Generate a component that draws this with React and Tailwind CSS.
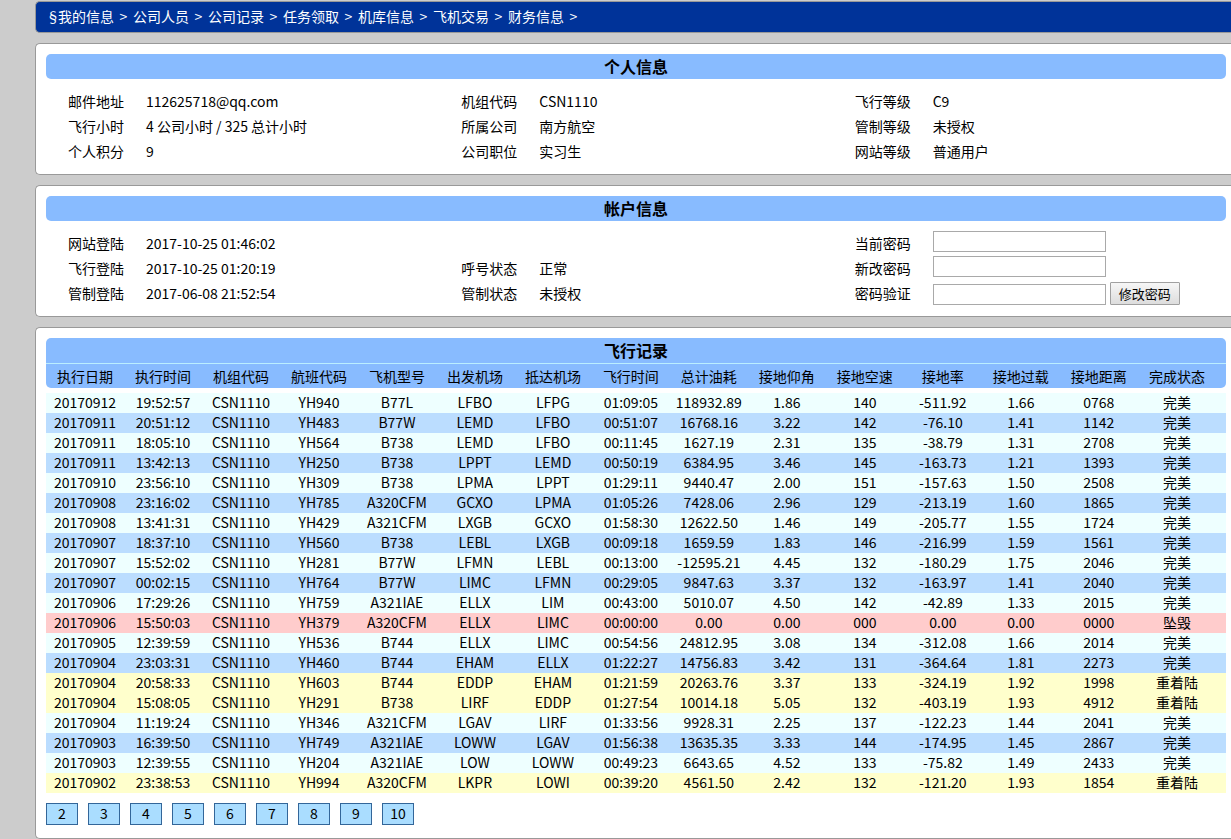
import React, { useState } from 'react';

const navItems = ['我的信息', '公司人员', '公司记录', '任务领取', '机库信息', '飞机交易', '财务信息'];

// one array per column, top to bottom
const profile = [
    [['邮件地址', '112625718@qq.com'], ['飞行小时', '4 公司小时 / 325 总计小时'], ['个人积分', '9']],
    [['机组代码', 'CSN1110'], ['所属公司', '南方航空'], ['公司职位', '实习生']],
    [['飞行等级', 'C9'], ['管制等级', '未授权'], ['网站等级', '普通用户']],
];

const logins = [
    ['网站登陆', '2017-10-25 01:46:02'],
    ['飞行登陆', '2017-10-25 01:20:19'],
    ['管制登陆', '2017-06-08 21:52:54'],
];

const statuses = [
    ['呼号状态', '正常'],
    ['管制状态', '未授权'],
];

const columns = [
    '执行日期', '执行时间', '机组代码', '航班代码', '飞机型号', '出发机场', '抵达机场', '飞行时间',
    '总计油耗', '接地仰角', '接地空速', '接地率', '接地过载', '接地距离', '完成状态',
];

const flights = [
    ['20170912', '19:52:57', 'CSN1110', 'YH940', 'B77L', 'LFBO', 'LFPG', '01:09:05', '118932.89', '1.86', '140', '-511.92', '1.66', '0768', '完美'],
    ['20170911', '20:51:12', 'CSN1110', 'YH483', 'B77W', 'LEMD', 'LFBO', '00:51:07', '16768.16', '3.22', '142', '-76.10', '1.41', '1142', '完美'],
    ['20170911', '18:05:10', 'CSN1110', 'YH564', 'B738', 'LEMD', 'LFBO', '00:11:45', '1627.19', '2.31', '135', '-38.79', '1.31', '2708', '完美'],
    ['20170911', '13:42:13', 'CSN1110', 'YH250', 'B738', 'LPPT', 'LEMD', '00:50:19', '6384.95', '3.46', '145', '-163.73', '1.21', '1393', '完美'],
    ['20170910', '23:56:10', 'CSN1110', 'YH309', 'B738', 'LPMA', 'LPPT', '01:29:11', '9440.47', '2.00', '151', '-157.63', '1.50', '2508', '完美'],
    ['20170908', '23:16:02', 'CSN1110', 'YH785', 'A320CFM', 'GCXO', 'LPMA', '01:05:26', '7428.06', '2.96', '129', '-213.19', '1.60', '1865', '完美'],
    ['20170908', '13:41:31', 'CSN1110', 'YH429', 'A321CFM', 'LXGB', 'GCXO', '01:58:30', '12622.50', '1.46', '149', '-205.77', '1.55', '1724', '完美'],
    ['20170907', '18:37:10', 'CSN1110', 'YH560', 'B738', 'LEBL', 'LXGB', '00:09:18', '1659.59', '1.83', '146', '-216.99', '1.59', '1561', '完美'],
    ['20170907', '15:52:02', 'CSN1110', 'YH281', 'B77W', 'LFMN', 'LEBL', '00:13:00', '-12595.21', '4.45', '132', '-180.29', '1.75', '2046', '完美'],
    ['20170907', '00:02:15', 'CSN1110', 'YH764', 'B77W', 'LIMC', 'LFMN', '00:29:05', '9847.63', '3.37', '132', '-163.97', '1.41', '2040', '完美'],
    ['20170906', '17:29:26', 'CSN1110', 'YH759', 'A321IAE', 'ELLX', 'LIM', '00:43:00', '5010.07', '4.50', '142', '-42.89', '1.33', '2015', '完美'],
    ['20170906', '15:50:03', 'CSN1110', 'YH379', 'A320CFM', 'ELLX', 'LIMC', '00:00:00', '0.00', '0.00', '000', '0.00', '0.00', '0000', '坠毁'],
    ['20170905', '12:39:59', 'CSN1110', 'YH536', 'B744', 'ELLX', 'LIMC', '00:54:56', '24812.95', '3.08', '134', '-312.08', '1.66', '2014', '完美'],
    ['20170904', '23:03:31', 'CSN1110', 'YH460', 'B744', 'EHAM', 'ELLX', '01:22:27', '14756.83', '3.42', '131', '-364.64', '1.81', '2273', '完美'],
    ['20170904', '20:58:33', 'CSN1110', 'YH603', 'B744', 'EDDP', 'EHAM', '01:21:59', '20263.76', '3.37', '133', '-324.19', '1.92', '1998', '重着陆'],
    ['20170904', '15:08:05', 'CSN1110', 'YH291', 'B738', 'LIRF', 'EDDP', '01:27:54', '10014.18', '5.05', '132', '-403.19', '1.93', '4912', '重着陆'],
    ['20170904', '11:19:24', 'CSN1110', 'YH346', 'A321CFM', 'LGAV', 'LIRF', '01:33:56', '9928.31', '2.25', '137', '-122.23', '1.44', '2041', '完美'],
    ['20170903', '16:39:50', 'CSN1110', 'YH749', 'A321IAE', 'LOWW', 'LGAV', '01:56:38', '13635.35', '3.33', '144', '-174.95', '1.45', '2867', '完美'],
    ['20170903', '12:39:55', 'CSN1110', 'YH204', 'A321IAE', 'LOW', 'LOWW', '00:49:23', '6643.65', '4.52', '133', '-75.82', '1.49', '2433', '完美'],
    ['20170902', '23:38:53', 'CSN1110', 'YH994', 'A320CFM', 'LKPR', 'LOWI', '00:39:20', '4561.50', '2.42', '132', '-121.20', '1.93', '1854', '重着陆'],
];

const pages = [2, 3, 4, 5, 6, 7, 8, 9, 10];

const rowColor = (status, index) => {
    if (status === '坠毁') return 'bg-[#ffcccc]';
    if (status === '重着陆') return 'bg-[#ffffcc]';
    return index % 2 === 0 ? 'bg-[#eeffff]' : 'bg-[#bbddff]';
};

const Panel = ({ children }) => (
    <section className="rounded-l-[5px] border border-r-0 border-[#999999] bg-white py-2.5 pl-2.5 pr-[5px]">
        {children}
    </section>
);

const PanelTitle = ({ children }) => (
    <h2 className="h-[25px] rounded-[5px] bg-[#88bbff] text-center text-base leading-[25px] font-bold">{children}</h2>
);

const InfoList = ({ items }) => (
    <dl>
        {items.map(([label, value]) => (
            <div key={label} className="flex h-[25px] leading-[25px]">
                <dt className="w-[100px] shrink-0 pl-[22px]">{label}</dt>
                <dd className="whitespace-nowrap">{value}</dd>
            </div>
        ))}
    </dl>
);

const PasswordField = ({ id, label, value, onChange, children }) => (
    <div className="flex h-[25px]">
        <label htmlFor={id} className="w-[100px] shrink-0 pl-[22px] leading-[25px]">{label}</label>
        <div className={`flex ${children ? 'items-end pb-px' : 'items-start'}`}>
            <input
                id={id}
                type="password"
                value={value}
                onChange={e => onChange(e.target.value)}
                className="h-[21px] w-[173px] border border-[#a9a9a9] bg-white px-1"
            />
            {children}
        </div>
    </div>
);

const PasswordForm = () => {
    const [current, setCurrent] = useState('');
    const [next, setNext] = useState('');
    const [confirm, setConfirm] = useState('');

    return (
        <form onSubmit={e => e.preventDefault()}>
            <PasswordField id="current" label="当前密码" value={current} onChange={setCurrent} />
            <PasswordField id="next" label="新改密码" value={next} onChange={setNext} />
            <PasswordField id="confirm" label="密码验证" value={confirm} onChange={setConfirm}>
                <button
                    type="submit"
                    className="ml-1 h-[23px] w-[70px] rounded-[1px] border border-[#a0a0a0] bg-gradient-to-b from-[#f6f6f6] to-[#dddddd] text-[13px] leading-5 whitespace-nowrap"
                >
                    修改密码
                </button>
            </PasswordField>
        </form>
    );
};

const FlightTable = () => (
    <table className="w-full table-fixed border-separate border-spacing-0 text-center">
        <thead>
            <tr>
                {columns.map(name => (
                    <th
                        key={name}
                        className="h-[25px] w-[6.61%] border-t border-[#bbeeff] bg-[#88bbff] p-0 leading-6 font-normal whitespace-nowrap first:rounded-bl-[5px] last:w-auto last:rounded-br-[5px] last:pr-2.5"
                    >
                        {name}
                    </th>
                ))}
            </tr>
        </thead>
        <tbody className="before:block before:h-[5px] before:content-['']">
            {flights.map((flight, i) => (
                <tr key={flight[0] + flight[1]} className={rowColor(flight[14], i)}>
                    {flight.map((cell, j) => (
                        <td key={j} className="h-5 p-0 align-top leading-[18px] whitespace-nowrap last:pr-2.5">{cell}</td>
                    ))}
                </tr>
            ))}
        </tbody>
    </table>
);

const App = () => (
    <div className="min-h-screen bg-[#cccccc] pt-px pl-[35px] font-['Noto_Sans_CJK_SC',sans-serif] text-sm text-black">
        <nav className="flex h-8 rounded-l-[5px] border border-r-0 border-[#999999] bg-[#003399] pl-2.5 leading-7 text-white">
            <span className="w-3">§</span>
            {navItems.map(item => (
                <React.Fragment key={item}>
                    <a href="#" className="whitespace-nowrap">{item}</a>
                    <span className="w-[19px] text-center">&gt;</span>
                </React.Fragment>
            ))}
        </nav>

        <main className="mt-2.5 space-y-2.5">
            <Panel>
                <PanelTitle>个人信息</PanelTitle>
                <div className="mt-2.5 grid grid-cols-3">
                    {profile.map((items, i) => <InfoList key={i} items={items} />)}
                </div>
            </Panel>

            <Panel>
                <PanelTitle>帐户信息</PanelTitle>
                <div className="mt-2.5 grid grid-cols-3">
                    <InfoList items={logins} />
                    <div className="flex flex-col justify-end">
                        <InfoList items={statuses} />
                    </div>
                    <PasswordForm />
                </div>
            </Panel>

            <Panel>
                <h2 className="h-[25px] rounded-t-[5px] bg-[#88bbff] text-center text-base leading-[25px] font-bold">飞行记录</h2>
                <FlightTable />
                <div className="mt-2.5 mb-[3px] flex gap-2.5">
                    {pages.map(page => (
                        <a key={page} href="#" className="h-[22px] w-8 border border-[#336699] bg-[#aaddff] text-center leading-[18px]">
                            {page}
                        </a>
                    ))}
                </div>
            </Panel>
        </main>
    </div>
);

export default App;
